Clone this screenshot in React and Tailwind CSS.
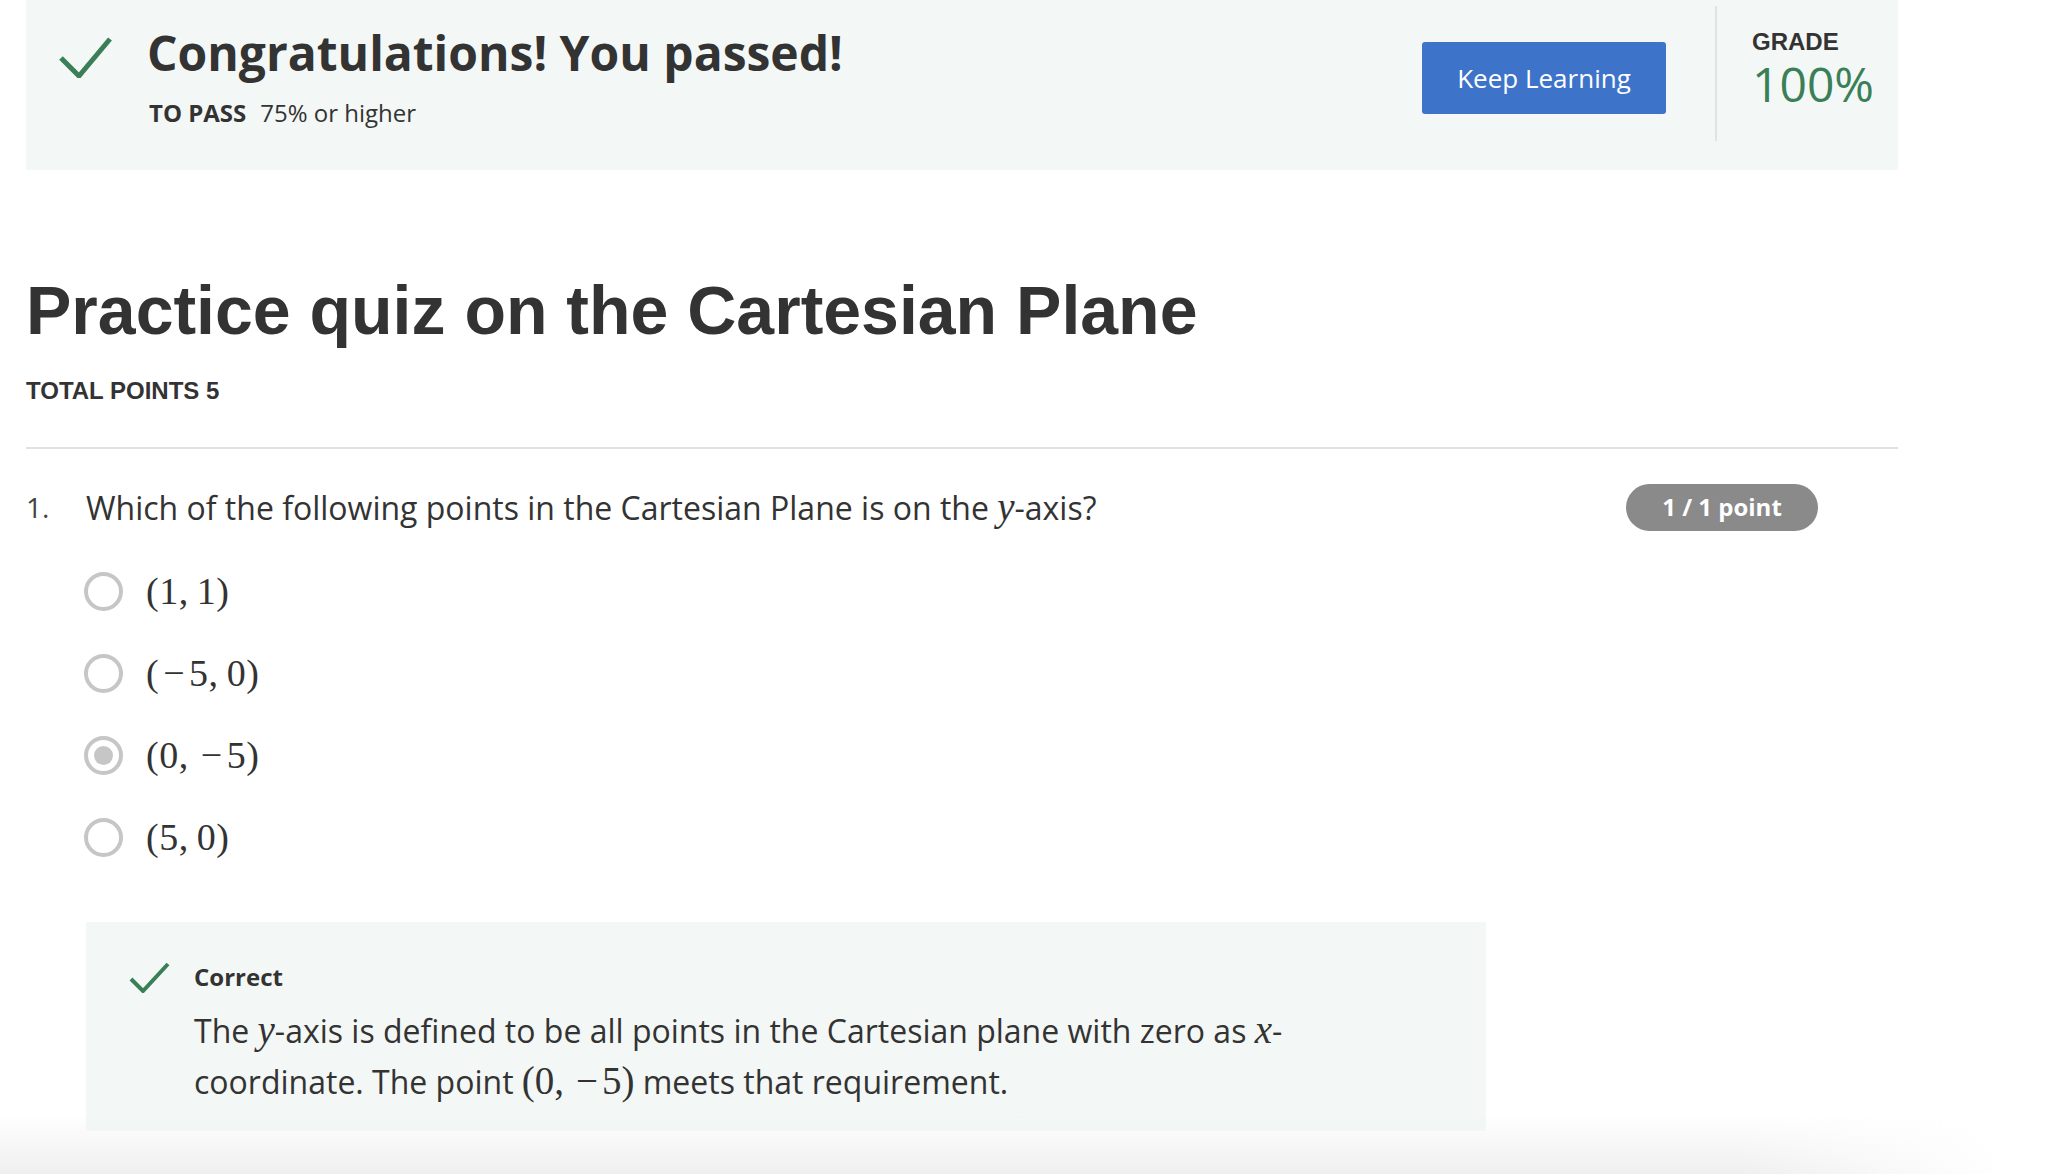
import React from 'react';

const Check = ({ className, points, strokeWidth, w, h }) => (
    <svg className={className} width={w} height={h} viewBox={`0 0 ${w} ${h}`} fill="none">
        <polyline points={points} stroke="#3a7f57" strokeWidth={strokeWidth} strokeLinecap="butt" strokeLinejoin="miter" />
    </svg>
);

const Minus = () => <span className="mx-[4px]">{'\u2212'}</span>;

const options = [
    { key: 'a', label: <>(1,{'\u2009'}1)</>, selected: false },
    { key: 'b', label: <>(<Minus />5,{'\u2009'}0)</>, selected: false },
    { key: 'c', label: <>(0,{'\u2009'}<Minus />5)</>, selected: true },
    { key: 'd', label: <>(5,{'\u2009'}0)</>, selected: false },
];

const Radio = ({ selected }) => (
    <span className="w-[39px] h-[39px] rounded-full border-[4px] border-[#c6c6c6] flex items-center justify-center shrink-0">
        {selected && <span className="w-[19px] h-[19px] rounded-full bg-[#c6c6c6]" />}
    </span>
);

const App = () => {
    return (
        <div className="min-h-screen bg-white text-[#333] font-['Open_Sans',sans-serif]">
            <div className="ml-[26px] w-[1872px]">
                {/* result banner */}
                <div className="h-[170px] bg-[#f3f8f6] flex items-start">
                    <div className="flex-1 flex items-start pl-[33px] pt-[37px]">
                        <Check className="shrink-0" w={53} h={41} points="2,21 20,39 51,2" strokeWidth={5} />
                        <div className="ml-[35px] -mt-[17px]">
                            <h2 className="text-[48px] leading-[66px] font-bold">Congratulations! You passed!</h2>
                            <div className="mt-[13px] ml-[2px] flex items-baseline gap-[14px] text-[24px] leading-[28px]">
                                <span className="font-bold">TO PASS</span>
                                <span>75% or higher</span>
                            </div>
                        </div>
                    </div>
                    <button className="mt-[42px] w-[244px] h-[72px] rounded-[3px] bg-[#3d73c8] text-white text-[26px]">
                        Keep Learning
                    </button>
                    <div className="ml-[49px] mt-[6px] w-[2px] h-[135px] bg-[#dfe3e1]" />
                    <div className="pl-[35px] pr-[24px] pt-[28px]">
                        <div className="font-['Liberation_Sans',Arial,sans-serif] font-bold text-[24px] leading-[28px] text-[#333]">GRADE</div>
                        <div className="text-[48px] leading-[56px] text-[#3a7f57]">100%</div>
                    </div>
                </div>

                {/* quiz title */}
                <h1 className="mt-[99px] font-['Liberation_Sans',Arial,sans-serif] font-bold text-[68px] leading-[82px] text-[#333]">
                    Practice quiz on the Cartesian Plane
                </h1>
                <div className="mt-[26px] font-['Liberation_Sans',Arial,sans-serif] font-bold text-[24px] leading-[28px] text-[#333]">
                    TOTAL POINTS 5
                </div>
                <div className="mt-[42px] h-[2px] bg-[#e1e1e1]" />

                {/* question */}
                <div className="mt-[34px] flex items-center pr-[80px]">
                    <span className="w-[60px] text-[28px] leading-[47px] text-[#444]">1.</span>
                    <p className="flex-1 text-[32px] leading-[47px] text-[#333]">
                        Which of the following points in the Cartesian Plane is on the{' '}
                        <span className="font-['Liberation_Serif',serif] italic text-[39px]">y</span>-axis?
                    </p>
                    <span className="w-[192px] h-[47px] rounded-full bg-[#8a8a8a] text-white font-bold text-[24px] flex items-center justify-center">
                        1 / 1 point
                    </span>
                </div>

                <div className="mt-[19px] ml-[58px] flex flex-col">
                    {options.map((opt) => (
                        <label key={opt.key} className="h-[82px] flex items-center gap-[23px]">
                            <Radio selected={opt.selected} />
                            <span className="font-['Liberation_Serif',serif] text-[38px] leading-[40px] tracking-[0.5px] text-[#333]">
                                {opt.label}
                            </span>
                        </label>
                    ))}
                </div>

                {/* feedback */}
                <div className="mt-[44px] ml-[60px] w-[1400px] h-[209px] bg-[#f3f8f6] flex items-start pl-[43px] pt-[40px]">
                    <Check className="shrink-0" w={41} h={31} points="2,17 14,29 39,2" strokeWidth={4} />
                    <div className="ml-[24px] -mt-[1px]">
                        <div className="font-bold text-[24px] leading-[32px] text-[#333]">Correct</div>
                        <p className="mt-[12px] text-[32px] leading-[50px] text-[#333]">
                            The <span className="font-['Liberation_Serif',serif] italic text-[39px]">y</span>-axis is defined to be all points in
                            the Cartesian plane with zero as{' '}
                            <span className="font-['Liberation_Serif',serif] italic text-[39px]">x</span>-
                            <br />
                            coordinate. The point{' '}
                            <span className="font-['Liberation_Serif',serif] text-[39px]">(0,{'\u2009'}<Minus />5)</span> meets that
                            requirement.
                        </p>
                    </div>
                </div>
            </div>

            {/* footer shadow at viewport bottom */}
            <div className="fixed left-0 right-0 bottom-0 h-[60px] pointer-events-none bg-linear-to-b from-white/0 to-[#efefef] [mask-image:linear-gradient(to_right,black_85%,transparent_98%)]" />
        </div>
    );
};

export default App;
